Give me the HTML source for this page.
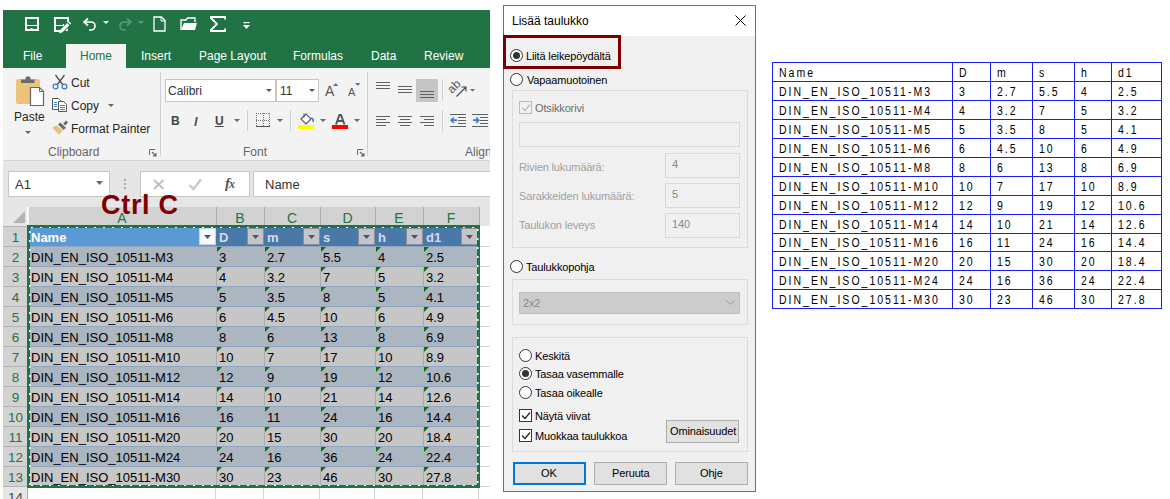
<!DOCTYPE html><html><head><meta charset="utf-8"><style>
*{margin:0;padding:0;box-sizing:border-box}
html,body{width:1170px;height:499px;overflow:hidden;background:#fff;font-family:"Liberation Sans",sans-serif}
.a{position:absolute}
.t{position:absolute;white-space:nowrap;line-height:1}
.tab{color:#fff;font-size:12px;top:50px}
.rt{color:#262626;font-size:12px}
.gl{color:#666;font-size:12px}
.box{background:#fff;border:1px solid #c6c6c6}
.ch{position:absolute;top:207px;height:19px;background:#d2d2d2;border-left:1px solid #ababab}
.rh{position:absolute;left:3px;width:24px;height:20px;background:#d2d2d2;border-top:1px solid #b4b4b4}
.hl{position:absolute;font-size:14px;color:#217346;white-space:nowrap;line-height:1;text-align:center}
.cell{position:absolute;font-size:13px;color:#000;white-space:nowrap;line-height:1}
.dt{position:absolute;white-space:nowrap;font-size:11px;letter-spacing:-0.15px;color:#000;line-height:1}
.gb{position:absolute;border:1px solid #dcdcdc}
.radio{position:absolute;width:13px;height:13px;border:1px solid #333;border-radius:50%;background:#fff}
.radio.on::after{content:"";position:absolute;left:2px;top:2px;width:7px;height:7px;border-radius:50%;background:#333}
.chk{position:absolute;width:13px;height:13px;border:1px solid #333;background:#fff}
.btn{position:absolute;background:#e1e1e1;border:1px solid #adadad}
#rtab{position:absolute;left:772px;top:62px;border-collapse:collapse;table-layout:fixed;width:390px}
#rtab td{border:1px solid #1a1aff;height:19px;padding:1px 0 0 6px;font-size:12px;letter-spacing:2.3px;color:#000;white-space:nowrap;line-height:16px;overflow:hidden}
#rtab span{display:inline-block;transform:scaleX(0.875);transform-origin:0 0}
</style></head><body>
<div class="a" style="left:3px;top:10px;width:487px;height:58px;background:#217346"></div>
<div class="a" style="left:66px;top:44px;width:60px;height:24px;background:#f3f3f3"></div>
<div class="t tab" style="left:23px;color:#fff">File</div>
<div class="t tab" style="left:80px;color:#217346">Home</div>
<div class="t tab" style="left:141px;color:#fff">Insert</div>
<div class="t tab" style="left:199px;color:#fff">Page Layout</div>
<div class="t tab" style="left:293px;color:#fff">Formulas</div>
<div class="t tab" style="left:371px;color:#fff">Data</div>
<div class="t tab" style="left:424px;color:#fff">Review</div>
<svg class="a" style="left:24px;top:16px" width="16" height="16" viewBox="0 0 16 16"><path d="M2 2h12v12H2z" fill="none" stroke="#fff" stroke-width="2"/><path d="M2 7.5l1.5 1.5h9l1.5-1.5V10H2z" fill="#fff"/><rect x="6.5" y="12" width="2" height="2" fill="#fff"/></svg>
<svg class="a" style="left:53px;top:16px" width="18" height="18" viewBox="0 0 18 18"><path d="M7 15H2V2h13v4" fill="none" stroke="#fff" stroke-width="2"/><path d="M2 7.5l1.5 1.5h6l1.5-1.5V10H2z" fill="#fff"/><path d="M6 17.5l1.2-3.5 7-7 2.3 2.3-7 7z" fill="#fff"/><path d="M15 6.3l1-1 2.3 2.3-1 1z" fill="#fff"/><path d="M12 15h3v-3z" fill="#fff"/></svg>
<svg class="a" style="left:82px;top:17px" width="16" height="14" viewBox="0 0 16 14"><path d="M6 1.5L2 5l4 3.5" fill="none" stroke="#fff" stroke-width="1.7"/><path d="M2.5 5H9a4 4 0 0 1 0 8H7" fill="none" stroke="#fff" stroke-width="1.7"/></svg>
<svg class="a" style="left:103px;top:21px" width="6" height="4" viewBox="0 0 6 4"><path d="M0 0h6l-3 3z" fill="#fff"/></svg>
<svg class="a" style="left:117px;top:17px" width="16" height="14" viewBox="0 0 16 14"><path d="M10 1.5L14 5l-4 3.5" fill="none" stroke="#5a9a76" stroke-width="1.7"/><path d="M13.5 5H7a4 4 0 0 0 0 8h2" fill="none" stroke="#5a9a76" stroke-width="1.7"/></svg>
<svg class="a" style="left:138px;top:21px" width="6" height="4" viewBox="0 0 6 4"><path d="M0 0h6l-3 3z" fill="#5a9a76"/></svg>
<svg class="a" style="left:153px;top:16px" width="13" height="16" viewBox="0 0 13 16"><path d="M1 1h7.5l3.5 3.5V15H1z" fill="none" stroke="#fff" stroke-width="1.3"/><path d="M8 1v4h4" fill="none" stroke="#fff" stroke-width="1"/></svg>
<svg class="a" style="left:180px;top:17px" width="18" height="14" viewBox="0 0 18 14"><path d="M1 13V3h5l1.5-2H15v4" fill="none" stroke="#fff" stroke-width="1.4"/><path d="M1 13l3-7h13l-2 7z" fill="#fff"/></svg>
<svg class="a" style="left:209px;top:16px" width="17" height="16" viewBox="0 0 17 16"><path d="M1 1h15v2.5M1.5 1.5L8 8l-6.5 6.5M1 15h15v-2.5" fill="none" stroke="#fff" stroke-width="1.8"/></svg>
<svg class="a" style="left:243px;top:22px" width="7" height="8" viewBox="0 0 7 8"><rect x="0.5" y="0" width="6" height="1.2" fill="#fff"/><path d="M0 3h7l-3.5 4z" fill="#fff"/></svg>
<div class="a" style="left:3px;top:68px;width:487px;height:93px;background:#f3f3f3;border-bottom:1px solid #d4d4d4"></div>
<svg class="a" style="left:14px;top:75px" width="32" height="32" viewBox="0 0 32 32"><rect x="2" y="4" width="24" height="25" rx="2" fill="#ecc37b"/><path d="M7 4.5h13.5v3.5H7z" fill="#6a6a6a"/><rect x="11.5" y="1.5" width="5" height="4" rx="1.5" fill="#6a6a6a"/><path d="M16.5 12.5h9l4 4v14h-13z" fill="#fff" stroke="#666" stroke-width="1.2"/><path d="M25.5 12.5v4h4" fill="none" stroke="#666" stroke-width="1"/></svg>
<div class="t rt" style="left:14px;top:111px">Paste</div>
<svg class="a" style="left:25px;top:131px" width="6" height="4" viewBox="0 0 6 4"><path d="M0 0h6l-3 3z" fill="#666"/></svg>
<svg class="a" style="left:51px;top:72px" width="18" height="18" viewBox="0 0 18 18"><path d="M4.5 3l7.5 10M13.5 3L6 13" stroke="#555" stroke-width="1.4"/><circle cx="4.5" cy="14.5" r="2.4" fill="#f3f3f3" stroke="#3a78c0" stroke-width="1.2"/><circle cx="13.5" cy="14.5" r="2.4" fill="#f3f3f3" stroke="#3a78c0" stroke-width="1.2"/></svg>
<div class="t rt" style="left:71px;top:77px">Cut</div>
<svg class="a" style="left:52px;top:97px" width="16" height="16" viewBox="0 0 16 16"><path d="M0.5 1.5h6l2 2V12.5h-8z" fill="#fff" stroke="#555" stroke-width="1"/><path d="M6.5 4.5h5l3 3V14.5h-8z" fill="#fff" stroke="#555" stroke-width="1"/><rect x="2" y="5" width="3" height="1" fill="#3c7fc4"/><rect x="2" y="7" width="3" height="1" fill="#3c7fc4"/><rect x="2" y="9" width="3" height="1" fill="#3c7fc4"/><rect x="8" y="8" width="5" height="1" fill="#3c7fc4"/><rect x="8" y="10" width="5" height="1" fill="#3c7fc4"/><rect x="8" y="12" width="5" height="1" fill="#3c7fc4"/></svg>
<div class="t rt" style="left:71px;top:100px">Copy</div>
<svg class="a" style="left:108px;top:104px" width="6" height="4" viewBox="0 0 6 4"><path d="M0 0h6l-3 3z" fill="#666"/></svg>
<svg class="a" style="left:50px;top:117px" width="20" height="20" viewBox="0 0 20 20"><path d="M2.2 10.4L6.6 8.6 12.8 13.6 8.8 17.6z" fill="#e9c07a"/><path d="M8 7.6L10.4 5.4 16 10.8 13.6 13z" fill="#6a6a6a"/><path d="M13.2 6.4L16 3.6 18 5.6 15.4 8.4z" fill="#6a6a6a"/></svg>
<div class="t rt" style="left:71px;top:123px">Format Painter</div>
<div class="t gl" style="left:48px;top:146px">Clipboard</div>
<svg class="a" style="left:149px;top:149px" width="8" height="8" viewBox="0 0 8 8"><path d="M0.5 6V0.5H6" fill="none" stroke="#6a6a6a" stroke-width="1"/><path d="M7.5 3.5v4h-4z" fill="#6a6a6a"/><path d="M3 3l3.5 3.5" stroke="#6a6a6a" stroke-width="1.2"/></svg>
<div class="a" style="left:160px;top:72px;width:1px;height:84px;background:#d0d0d0"></div>
<div class="a box" style="left:165px;top:79px;width:111px;height:23px;border-color:#c6c6c6"></div>
<div class="a box" style="left:276px;top:79px;width:43px;height:23px;border-color:#c6c6c6"></div>
<div class="t rt" style="left:168px;top:85px;color:#333">Calibri</div>
<div class="t rt" style="left:280px;top:85px;color:#333">11</div>
<svg class="a" style="left:266px;top:89px" width="6" height="4" viewBox="0 0 6 4"><path d="M0 0h6l-3 3z" fill="#555"/></svg>
<svg class="a" style="left:309px;top:89px" width="6" height="4" viewBox="0 0 6 4"><path d="M0 0h6l-3 3z" fill="#555"/></svg>
<div class="t" style="left:325px;top:84px;font-size:14px;color:#555">A</div>
<svg class="a" style="left:333px;top:82px" width="6" height="5" viewBox="0 0 6 5"><path d="M0 4h5.5L2.75 1z" fill="#3c7fc4"/></svg>
<div class="t" style="left:348px;top:87px;font-size:11px;color:#555">A</div>
<svg class="a" style="left:355px;top:82px" width="6" height="5" viewBox="0 0 6 5"><path d="M0 1h5.5L2.75 4z" fill="#3c7fc4"/></svg>
<div class="t" style="left:171px;top:115px;font-size:12px;font-weight:bold;color:#444">B</div>
<div class="t" style="left:194px;top:115px;font-size:13px;font-style:italic;font-weight:bold;color:#555">I</div>
<div class="t" style="left:215px;top:115px;font-size:12px;font-weight:bold;color:#444;text-decoration:underline">U</div>
<svg class="a" style="left:234px;top:119px" width="6" height="4" viewBox="0 0 6 4"><path d="M0 0h6l-3 3z" fill="#666"/></svg>
<div class="a" style="left:247px;top:110px;width:1px;height:21px;background:#d0d0d0"></div>
<svg class="a" style="left:256px;top:113px" width="14" height="14" viewBox="0 0 14 14"><path d="M0.5 0v13M13.5 0v13M7.5 0v13M0 0.5h14M0 7.5h14" fill="none" stroke="#777" stroke-width="1" stroke-dasharray="1 1"/><path d="M0 13.5h14" stroke="#555" stroke-width="1"/></svg>
<svg class="a" style="left:277px;top:119px" width="6" height="4" viewBox="0 0 6 4"><path d="M0 0h6l-3 3z" fill="#666"/></svg>
<div class="a" style="left:290px;top:110px;width:1px;height:21px;background:#d0d0d0"></div>
<svg class="a" style="left:298px;top:112px" width="17" height="17" viewBox="0 0 17 17"><path d="M3 7l5-5 5 5-5 5z" fill="#fff" stroke="#555" stroke-width="1.1"/><path d="M6 1.5v4" stroke="#555"/><path d="M13 6c2 0 2.5 2 2 4" fill="none" stroke="#3c7fc4" stroke-width="1.6"/><rect x="0" y="13" width="16" height="4" fill="#ffff00"/></svg>
<svg class="a" style="left:320px;top:119px" width="6" height="4" viewBox="0 0 6 4"><path d="M0 0h6l-3 3z" fill="#666"/></svg>
<svg class="a" style="left:332px;top:112px" width="17" height="17" viewBox="0 0 17 17"><path d="M4 12.5L7.5 3h1.5L12.5 12.5M5.3 9h6" fill="none" stroke="#555" stroke-width="2"/><rect x="0" y="13" width="16" height="4" fill="#f00"/></svg>
<svg class="a" style="left:354px;top:119px" width="6" height="4" viewBox="0 0 6 4"><path d="M0 0h6l-3 3z" fill="#666"/></svg>
<div class="t gl" style="left:243px;top:146px">Font</div>
<svg class="a" style="left:357px;top:149px" width="8" height="8" viewBox="0 0 8 8"><path d="M0.5 6V0.5H6" fill="none" stroke="#6a6a6a" stroke-width="1"/><path d="M7.5 3.5v4h-4z" fill="#6a6a6a"/><path d="M3 3l3.5 3.5" stroke="#6a6a6a" stroke-width="1.2"/></svg>
<div class="a" style="left:367px;top:72px;width:1px;height:84px;background:#d0d0d0"></div>
<div class="a" style="left:416px;top:79px;width:22px;height:23px;background:#c5c5c5"></div>
<svg class="a" style="left:376px;top:82px" width="16" height="10" viewBox="0 0 16 10"><rect x="0" y="0" width="14" height="1" fill="#5f5f5f"/><rect x="0" y="3" width="14" height="1" fill="#5f5f5f"/><rect x="0" y="6" width="14" height="1" fill="#5f5f5f"/></svg>
<svg class="a" style="left:398px;top:86px" width="16" height="10" viewBox="0 0 16 10"><rect x="0" y="0" width="14" height="1" fill="#5f5f5f"/><rect x="0" y="3" width="14" height="1" fill="#5f5f5f"/><rect x="0" y="6" width="14" height="1" fill="#5f5f5f"/></svg>
<svg class="a" style="left:420px;top:91px" width="16" height="10" viewBox="0 0 16 10"><rect x="0" y="0" width="14" height="1" fill="#5f5f5f"/><rect x="0" y="3" width="14" height="1" fill="#5f5f5f"/><rect x="0" y="6" width="14" height="1" fill="#5f5f5f"/></svg>
<div class="a" style="left:442px;top:79px;width:1px;height:22px;background:#d0d0d0"></div>
<svg class="a" style="left:448px;top:80px" width="28" height="20" viewBox="0 0 28 20"><text x="0" y="0" font-size="12" fill="#555" font-family="Liberation Sans" transform="translate(4 14) rotate(-45)">ab</text><path d="M8.5 16.5l9-9M13.5 7h4.5v4.5" fill="none" stroke="#444" stroke-width="1.1"/><path d="M22 9h5l-2.5 2.5z" fill="#666"/></svg>
<svg class="a" style="left:376px;top:116px" width="16" height="13" viewBox="0 0 16 13"><rect x="0" y="0" width="14" height="1" fill="#5f5f5f"/><rect x="0" y="3" width="10" height="1" fill="#5f5f5f"/><rect x="0" y="6" width="14" height="1" fill="#5f5f5f"/><rect x="0" y="9" width="10" height="1" fill="#5f5f5f"/></svg>
<svg class="a" style="left:398px;top:116px" width="16" height="13" viewBox="0 0 16 13"><rect x="0" y="0" width="14" height="1" fill="#5f5f5f"/><rect x="2" y="3" width="10" height="1" fill="#5f5f5f"/><rect x="0" y="6" width="14" height="1" fill="#5f5f5f"/><rect x="2" y="9" width="10" height="1" fill="#5f5f5f"/></svg>
<svg class="a" style="left:420px;top:116px" width="16" height="13" viewBox="0 0 16 13"><rect x="0" y="0" width="14" height="1" fill="#5f5f5f"/><rect x="4" y="3" width="10" height="1" fill="#5f5f5f"/><rect x="0" y="6" width="14" height="1" fill="#5f5f5f"/><rect x="4" y="9" width="10" height="1" fill="#5f5f5f"/></svg>
<div class="a" style="left:442px;top:110px;width:1px;height:22px;background:#d0d0d0"></div>
<svg class="a" style="left:450px;top:114px" width="17" height="14" viewBox="0 0 17 14"><path d="M0 0.5h16M8 3.5h8M8 6.5h8M8 9.5h8M0 12.5h16" stroke="#5f5f5f" stroke-width="1"/><path d="M1 6.2h6M3.8 3.5L1.2 6.2 3.8 9" fill="none" stroke="#3c7fc4" stroke-width="1.7"/></svg>
<svg class="a" style="left:472px;top:114px" width="17" height="14" viewBox="0 0 17 14"><path d="M0 0.5h16M8 3.5h8M8 6.5h8M8 9.5h8M0 12.5h16" stroke="#5f5f5f" stroke-width="1"/><path d="M1 6.2h6M4.2 3.5L6.8 6.2 4.2 9" fill="none" stroke="#3c7fc4" stroke-width="1.7"/></svg>
<div class="a" style="left:465px;top:146px;width:25px;height:14px;overflow:hidden"><div class="t gl" style="left:0;top:0">Align</div></div>
<div class="a" style="left:3px;top:161px;width:487px;height:46px;background:#e6e6e6"></div>
<div class="a box" style="left:8px;top:171px;width:102px;height:26px"></div>
<div class="t" style="left:15px;top:178px;font-size:13px;color:#333">A1</div>
<svg class="a" style="left:96px;top:181px" width="8" height="5" viewBox="0 0 8 5"><path d="M0 0h7l-3.5 4z" fill="#6a6a6a"/></svg>
<svg class="a" style="left:123px;top:176px" width="4" height="16" viewBox="0 0 4 16"><rect x="1" y="3" width="2" height="2" fill="#aaa"/><rect x="1" y="7" width="2" height="2" fill="#aaa"/><rect x="1" y="11" width="2" height="2" fill="#aaa"/></svg>
<div class="a box" style="left:140px;top:171px;width:110px;height:26px"></div>
<svg class="a" style="left:153px;top:179px" width="12" height="11" viewBox="0 0 12 11"><path d="M1 1l9.5 9M10.5 1l-9.5 9" stroke="#bdbdbd" stroke-width="1.8"/></svg>
<svg class="a" style="left:188px;top:178px" width="15" height="13" viewBox="0 0 15 13"><path d="M1.5 7l4 4 7.5-9.5" fill="none" stroke="#c8c8c8" stroke-width="2.4"/></svg>
<div class="t" style="left:225px;top:176px;font-size:15px;font-style:italic;font-weight:bold;color:#555;font-family:'Liberation Serif'">f<span style="font-size:12px;position:relative;left:-1px">x</span></div>
<div class="a box" style="left:253px;top:171px;width:237px;height:26px;border-right:none"></div>
<div class="t" style="left:265px;top:178px;font-size:13px;color:#333">Name</div>
<div class="a" style="left:3px;top:207px;width:487px;height:292px;background:#fff"></div>
<div class="a" style="left:3px;top:207px;width:25px;height:19px;background:#e6e6e6;border-right:1px solid #fff"></div>
<svg class="a" style="left:13px;top:211px" width="13" height="12" viewBox="0 0 13 12"><path d="M12 0v12H0z" fill="#b4b4b4"/></svg>
<div class="ch" style="left:28px;width:188px;border-left-color:#f0f0f0"></div>
<div class="hl" style="left:28px;width:188px;top:211px">A</div>
<div class="ch" style="left:216px;width:48px;"></div>
<div class="hl" style="left:216px;width:48px;top:211px">B</div>
<div class="ch" style="left:264px;width:56px;"></div>
<div class="hl" style="left:264px;width:56px;top:211px">C</div>
<div class="ch" style="left:320px;width:55px;"></div>
<div class="hl" style="left:320px;width:55px;top:211px">D</div>
<div class="ch" style="left:375px;width:48px;"></div>
<div class="hl" style="left:375px;width:48px;top:211px">E</div>
<div class="ch" style="left:423px;width:56px;"></div>
<div class="hl" style="left:423px;width:56px;top:211px">F</div>
<div class="a" style="left:479px;top:207px;width:11px;height:20px;background:#e6e6e6;border-left:1px solid #ababab;border-bottom:1px solid #9e9e9e"></div>
<div class="rh" style="top:226px"></div>
<div class="hl" style="left:3px;width:25px;top:231px;font-size:13.5px;">1</div>
<div class="rh" style="top:246px"></div>
<div class="hl" style="left:3px;width:25px;top:251px;font-size:13.5px;">2</div>
<div class="rh" style="top:266px"></div>
<div class="hl" style="left:3px;width:25px;top:271px;font-size:13.5px;">3</div>
<div class="rh" style="top:286px"></div>
<div class="hl" style="left:3px;width:25px;top:291px;font-size:13.5px;">4</div>
<div class="rh" style="top:306px"></div>
<div class="hl" style="left:3px;width:25px;top:311px;font-size:13.5px;">5</div>
<div class="rh" style="top:326px"></div>
<div class="hl" style="left:3px;width:25px;top:331px;font-size:13.5px;">6</div>
<div class="rh" style="top:346px"></div>
<div class="hl" style="left:3px;width:25px;top:351px;font-size:13.5px;">7</div>
<div class="rh" style="top:366px"></div>
<div class="hl" style="left:3px;width:25px;top:371px;font-size:13.5px;">8</div>
<div class="rh" style="top:386px"></div>
<div class="hl" style="left:3px;width:25px;top:391px;font-size:13.5px;">9</div>
<div class="rh" style="top:406px"></div>
<div class="hl" style="left:3px;width:25px;top:411px;font-size:13.5px;">10</div>
<div class="rh" style="top:426px"></div>
<div class="hl" style="left:3px;width:25px;top:431px;font-size:13.5px;">11</div>
<div class="rh" style="top:446px"></div>
<div class="hl" style="left:3px;width:25px;top:451px;font-size:13.5px;">12</div>
<div class="rh" style="top:466px"></div>
<div class="hl" style="left:3px;width:25px;top:471px;font-size:13.5px;">13</div>
<div class="rh" style="top:486px;background:#e6e6e6"></div>
<div class="hl" style="left:3px;width:25px;top:491px;font-size:13.5px;color:#444">14</div>
<div class="a" style="left:27px;top:226px;width:1px;height:273px;background:#ababab"></div>
<div class="a" style="left:215px;top:486px;width:1px;height:13px;background:#d4d4d4"></div>
<div class="a" style="left:263px;top:486px;width:1px;height:13px;background:#d4d4d4"></div>
<div class="a" style="left:319px;top:486px;width:1px;height:13px;background:#d4d4d4"></div>
<div class="a" style="left:374px;top:486px;width:1px;height:13px;background:#d4d4d4"></div>
<div class="a" style="left:422px;top:486px;width:1px;height:13px;background:#d4d4d4"></div>
<div class="a" style="left:478px;top:486px;width:1px;height:13px;background:#d4d4d4"></div>
<div class="a" style="left:479px;top:226px;width:11px;height:273px;background:#fff"></div>
<div class="a" style="left:479px;top:246px;width:11px;height:1px;background:#d4d4d4"></div>
<div class="a" style="left:479px;top:266px;width:11px;height:1px;background:#d4d4d4"></div>
<div class="a" style="left:479px;top:286px;width:11px;height:1px;background:#d4d4d4"></div>
<div class="a" style="left:479px;top:306px;width:11px;height:1px;background:#d4d4d4"></div>
<div class="a" style="left:479px;top:326px;width:11px;height:1px;background:#d4d4d4"></div>
<div class="a" style="left:479px;top:346px;width:11px;height:1px;background:#d4d4d4"></div>
<div class="a" style="left:479px;top:366px;width:11px;height:1px;background:#d4d4d4"></div>
<div class="a" style="left:479px;top:386px;width:11px;height:1px;background:#d4d4d4"></div>
<div class="a" style="left:479px;top:406px;width:11px;height:1px;background:#d4d4d4"></div>
<div class="a" style="left:479px;top:426px;width:11px;height:1px;background:#d4d4d4"></div>
<div class="a" style="left:479px;top:446px;width:11px;height:1px;background:#d4d4d4"></div>
<div class="a" style="left:479px;top:466px;width:11px;height:1px;background:#d4d4d4"></div>
<div class="a" style="left:479px;top:486px;width:11px;height:1px;background:#d4d4d4"></div>
<div class="a" style="left:28px;top:226px;width:451px;height:20px;background:#4a78a8;"></div>
<div class="a" style="left:28px;top:226px;width:188px;height:20px;background:#5b9bd5"></div>
<div class="a" style="left:199px;top:228px;width:17px;height:17px;background:#f5f8fc;border:1px solid #c6d3e0"></div>
<svg class="a" style="left:204px;top:235px" width="8" height="5" viewBox="0 0 8 5"><path d="M0 0h7l-3.5 4z" fill="#555"/></svg>
<div class="a" style="left:247px;top:228px;width:17px;height:17px;background:#c2c6cc;border:1px solid #8a8f96"></div>
<svg class="a" style="left:252px;top:235px" width="8" height="5" viewBox="0 0 8 5"><path d="M0 0h7l-3.5 4z" fill="#555"/></svg>
<div class="a" style="left:303px;top:228px;width:17px;height:17px;background:#c2c6cc;border:1px solid #8a8f96"></div>
<svg class="a" style="left:308px;top:235px" width="8" height="5" viewBox="0 0 8 5"><path d="M0 0h7l-3.5 4z" fill="#555"/></svg>
<div class="a" style="left:358px;top:228px;width:17px;height:17px;background:#c2c6cc;border:1px solid #8a8f96"></div>
<svg class="a" style="left:363px;top:235px" width="8" height="5" viewBox="0 0 8 5"><path d="M0 0h7l-3.5 4z" fill="#555"/></svg>
<div class="a" style="left:406px;top:228px;width:17px;height:17px;background:#c2c6cc;border:1px solid #8a8f96"></div>
<svg class="a" style="left:411px;top:235px" width="8" height="5" viewBox="0 0 8 5"><path d="M0 0h7l-3.5 4z" fill="#555"/></svg>
<div class="a" style="left:461px;top:228px;width:17px;height:17px;background:#c2c6cc;border:1px solid #8a8f96"></div>
<svg class="a" style="left:466px;top:235px" width="8" height="5" viewBox="0 0 8 5"><path d="M0 0h7l-3.5 4z" fill="#555"/></svg>
<div class="a" style="left:28px;top:246px;width:451px;height:20px;background:#acb6c1;border-top:1px solid #8ea6c2"></div>
<svg class="a" style="left:217px;top:247px" width="5" height="5" viewBox="0 0 5 5"><path d="M0 0h5L0 5z" fill="#0b700b"/></svg>
<svg class="a" style="left:265px;top:247px" width="5" height="5" viewBox="0 0 5 5"><path d="M0 0h5L0 5z" fill="#0b700b"/></svg>
<svg class="a" style="left:321px;top:247px" width="5" height="5" viewBox="0 0 5 5"><path d="M0 0h5L0 5z" fill="#0b700b"/></svg>
<svg class="a" style="left:376px;top:247px" width="5" height="5" viewBox="0 0 5 5"><path d="M0 0h5L0 5z" fill="#0b700b"/></svg>
<svg class="a" style="left:424px;top:247px" width="5" height="5" viewBox="0 0 5 5"><path d="M0 0h5L0 5z" fill="#0b700b"/></svg>
<div class="a" style="left:28px;top:266px;width:451px;height:20px;background:#c6c6c6;border-top:1px solid #8ea6c2"></div>
<div class="a" style="left:216px;top:266px;width:1px;height:20px;background:#ababab"></div>
<svg class="a" style="left:217px;top:267px" width="5" height="5" viewBox="0 0 5 5"><path d="M0 0h5L0 5z" fill="#0b700b"/></svg>
<div class="a" style="left:264px;top:266px;width:1px;height:20px;background:#ababab"></div>
<svg class="a" style="left:265px;top:267px" width="5" height="5" viewBox="0 0 5 5"><path d="M0 0h5L0 5z" fill="#0b700b"/></svg>
<div class="a" style="left:320px;top:266px;width:1px;height:20px;background:#ababab"></div>
<svg class="a" style="left:321px;top:267px" width="5" height="5" viewBox="0 0 5 5"><path d="M0 0h5L0 5z" fill="#0b700b"/></svg>
<div class="a" style="left:375px;top:266px;width:1px;height:20px;background:#ababab"></div>
<svg class="a" style="left:376px;top:267px" width="5" height="5" viewBox="0 0 5 5"><path d="M0 0h5L0 5z" fill="#0b700b"/></svg>
<div class="a" style="left:423px;top:266px;width:1px;height:20px;background:#ababab"></div>
<svg class="a" style="left:424px;top:267px" width="5" height="5" viewBox="0 0 5 5"><path d="M0 0h5L0 5z" fill="#0b700b"/></svg>
<div class="a" style="left:28px;top:286px;width:451px;height:20px;background:#acb6c1;border-top:1px solid #8ea6c2"></div>
<svg class="a" style="left:217px;top:287px" width="5" height="5" viewBox="0 0 5 5"><path d="M0 0h5L0 5z" fill="#0b700b"/></svg>
<svg class="a" style="left:265px;top:287px" width="5" height="5" viewBox="0 0 5 5"><path d="M0 0h5L0 5z" fill="#0b700b"/></svg>
<svg class="a" style="left:321px;top:287px" width="5" height="5" viewBox="0 0 5 5"><path d="M0 0h5L0 5z" fill="#0b700b"/></svg>
<svg class="a" style="left:376px;top:287px" width="5" height="5" viewBox="0 0 5 5"><path d="M0 0h5L0 5z" fill="#0b700b"/></svg>
<svg class="a" style="left:424px;top:287px" width="5" height="5" viewBox="0 0 5 5"><path d="M0 0h5L0 5z" fill="#0b700b"/></svg>
<div class="a" style="left:28px;top:306px;width:451px;height:20px;background:#c6c6c6;border-top:1px solid #8ea6c2"></div>
<div class="a" style="left:216px;top:306px;width:1px;height:20px;background:#ababab"></div>
<svg class="a" style="left:217px;top:307px" width="5" height="5" viewBox="0 0 5 5"><path d="M0 0h5L0 5z" fill="#0b700b"/></svg>
<div class="a" style="left:264px;top:306px;width:1px;height:20px;background:#ababab"></div>
<svg class="a" style="left:265px;top:307px" width="5" height="5" viewBox="0 0 5 5"><path d="M0 0h5L0 5z" fill="#0b700b"/></svg>
<div class="a" style="left:320px;top:306px;width:1px;height:20px;background:#ababab"></div>
<svg class="a" style="left:321px;top:307px" width="5" height="5" viewBox="0 0 5 5"><path d="M0 0h5L0 5z" fill="#0b700b"/></svg>
<div class="a" style="left:375px;top:306px;width:1px;height:20px;background:#ababab"></div>
<svg class="a" style="left:376px;top:307px" width="5" height="5" viewBox="0 0 5 5"><path d="M0 0h5L0 5z" fill="#0b700b"/></svg>
<div class="a" style="left:423px;top:306px;width:1px;height:20px;background:#ababab"></div>
<svg class="a" style="left:424px;top:307px" width="5" height="5" viewBox="0 0 5 5"><path d="M0 0h5L0 5z" fill="#0b700b"/></svg>
<div class="a" style="left:28px;top:326px;width:451px;height:20px;background:#acb6c1;border-top:1px solid #8ea6c2"></div>
<svg class="a" style="left:217px;top:327px" width="5" height="5" viewBox="0 0 5 5"><path d="M0 0h5L0 5z" fill="#0b700b"/></svg>
<svg class="a" style="left:265px;top:327px" width="5" height="5" viewBox="0 0 5 5"><path d="M0 0h5L0 5z" fill="#0b700b"/></svg>
<svg class="a" style="left:321px;top:327px" width="5" height="5" viewBox="0 0 5 5"><path d="M0 0h5L0 5z" fill="#0b700b"/></svg>
<svg class="a" style="left:376px;top:327px" width="5" height="5" viewBox="0 0 5 5"><path d="M0 0h5L0 5z" fill="#0b700b"/></svg>
<svg class="a" style="left:424px;top:327px" width="5" height="5" viewBox="0 0 5 5"><path d="M0 0h5L0 5z" fill="#0b700b"/></svg>
<div class="a" style="left:28px;top:346px;width:451px;height:20px;background:#c6c6c6;border-top:1px solid #8ea6c2"></div>
<div class="a" style="left:216px;top:346px;width:1px;height:20px;background:#ababab"></div>
<svg class="a" style="left:217px;top:347px" width="5" height="5" viewBox="0 0 5 5"><path d="M0 0h5L0 5z" fill="#0b700b"/></svg>
<div class="a" style="left:264px;top:346px;width:1px;height:20px;background:#ababab"></div>
<svg class="a" style="left:265px;top:347px" width="5" height="5" viewBox="0 0 5 5"><path d="M0 0h5L0 5z" fill="#0b700b"/></svg>
<div class="a" style="left:320px;top:346px;width:1px;height:20px;background:#ababab"></div>
<svg class="a" style="left:321px;top:347px" width="5" height="5" viewBox="0 0 5 5"><path d="M0 0h5L0 5z" fill="#0b700b"/></svg>
<div class="a" style="left:375px;top:346px;width:1px;height:20px;background:#ababab"></div>
<svg class="a" style="left:376px;top:347px" width="5" height="5" viewBox="0 0 5 5"><path d="M0 0h5L0 5z" fill="#0b700b"/></svg>
<div class="a" style="left:423px;top:346px;width:1px;height:20px;background:#ababab"></div>
<svg class="a" style="left:424px;top:347px" width="5" height="5" viewBox="0 0 5 5"><path d="M0 0h5L0 5z" fill="#0b700b"/></svg>
<div class="a" style="left:28px;top:366px;width:451px;height:20px;background:#acb6c1;border-top:1px solid #8ea6c2"></div>
<svg class="a" style="left:217px;top:367px" width="5" height="5" viewBox="0 0 5 5"><path d="M0 0h5L0 5z" fill="#0b700b"/></svg>
<svg class="a" style="left:265px;top:367px" width="5" height="5" viewBox="0 0 5 5"><path d="M0 0h5L0 5z" fill="#0b700b"/></svg>
<svg class="a" style="left:321px;top:367px" width="5" height="5" viewBox="0 0 5 5"><path d="M0 0h5L0 5z" fill="#0b700b"/></svg>
<svg class="a" style="left:376px;top:367px" width="5" height="5" viewBox="0 0 5 5"><path d="M0 0h5L0 5z" fill="#0b700b"/></svg>
<svg class="a" style="left:424px;top:367px" width="5" height="5" viewBox="0 0 5 5"><path d="M0 0h5L0 5z" fill="#0b700b"/></svg>
<div class="a" style="left:28px;top:386px;width:451px;height:20px;background:#c6c6c6;border-top:1px solid #8ea6c2"></div>
<div class="a" style="left:216px;top:386px;width:1px;height:20px;background:#ababab"></div>
<svg class="a" style="left:217px;top:387px" width="5" height="5" viewBox="0 0 5 5"><path d="M0 0h5L0 5z" fill="#0b700b"/></svg>
<div class="a" style="left:264px;top:386px;width:1px;height:20px;background:#ababab"></div>
<svg class="a" style="left:265px;top:387px" width="5" height="5" viewBox="0 0 5 5"><path d="M0 0h5L0 5z" fill="#0b700b"/></svg>
<div class="a" style="left:320px;top:386px;width:1px;height:20px;background:#ababab"></div>
<svg class="a" style="left:321px;top:387px" width="5" height="5" viewBox="0 0 5 5"><path d="M0 0h5L0 5z" fill="#0b700b"/></svg>
<div class="a" style="left:375px;top:386px;width:1px;height:20px;background:#ababab"></div>
<svg class="a" style="left:376px;top:387px" width="5" height="5" viewBox="0 0 5 5"><path d="M0 0h5L0 5z" fill="#0b700b"/></svg>
<div class="a" style="left:423px;top:386px;width:1px;height:20px;background:#ababab"></div>
<svg class="a" style="left:424px;top:387px" width="5" height="5" viewBox="0 0 5 5"><path d="M0 0h5L0 5z" fill="#0b700b"/></svg>
<div class="a" style="left:28px;top:406px;width:451px;height:20px;background:#acb6c1;border-top:1px solid #8ea6c2"></div>
<svg class="a" style="left:217px;top:407px" width="5" height="5" viewBox="0 0 5 5"><path d="M0 0h5L0 5z" fill="#0b700b"/></svg>
<svg class="a" style="left:265px;top:407px" width="5" height="5" viewBox="0 0 5 5"><path d="M0 0h5L0 5z" fill="#0b700b"/></svg>
<svg class="a" style="left:321px;top:407px" width="5" height="5" viewBox="0 0 5 5"><path d="M0 0h5L0 5z" fill="#0b700b"/></svg>
<svg class="a" style="left:376px;top:407px" width="5" height="5" viewBox="0 0 5 5"><path d="M0 0h5L0 5z" fill="#0b700b"/></svg>
<svg class="a" style="left:424px;top:407px" width="5" height="5" viewBox="0 0 5 5"><path d="M0 0h5L0 5z" fill="#0b700b"/></svg>
<div class="a" style="left:28px;top:426px;width:451px;height:20px;background:#c6c6c6;border-top:1px solid #8ea6c2"></div>
<div class="a" style="left:216px;top:426px;width:1px;height:20px;background:#ababab"></div>
<svg class="a" style="left:217px;top:427px" width="5" height="5" viewBox="0 0 5 5"><path d="M0 0h5L0 5z" fill="#0b700b"/></svg>
<div class="a" style="left:264px;top:426px;width:1px;height:20px;background:#ababab"></div>
<svg class="a" style="left:265px;top:427px" width="5" height="5" viewBox="0 0 5 5"><path d="M0 0h5L0 5z" fill="#0b700b"/></svg>
<div class="a" style="left:320px;top:426px;width:1px;height:20px;background:#ababab"></div>
<svg class="a" style="left:321px;top:427px" width="5" height="5" viewBox="0 0 5 5"><path d="M0 0h5L0 5z" fill="#0b700b"/></svg>
<div class="a" style="left:375px;top:426px;width:1px;height:20px;background:#ababab"></div>
<svg class="a" style="left:376px;top:427px" width="5" height="5" viewBox="0 0 5 5"><path d="M0 0h5L0 5z" fill="#0b700b"/></svg>
<div class="a" style="left:423px;top:426px;width:1px;height:20px;background:#ababab"></div>
<svg class="a" style="left:424px;top:427px" width="5" height="5" viewBox="0 0 5 5"><path d="M0 0h5L0 5z" fill="#0b700b"/></svg>
<div class="a" style="left:28px;top:446px;width:451px;height:20px;background:#acb6c1;border-top:1px solid #8ea6c2"></div>
<svg class="a" style="left:217px;top:447px" width="5" height="5" viewBox="0 0 5 5"><path d="M0 0h5L0 5z" fill="#0b700b"/></svg>
<svg class="a" style="left:265px;top:447px" width="5" height="5" viewBox="0 0 5 5"><path d="M0 0h5L0 5z" fill="#0b700b"/></svg>
<svg class="a" style="left:321px;top:447px" width="5" height="5" viewBox="0 0 5 5"><path d="M0 0h5L0 5z" fill="#0b700b"/></svg>
<svg class="a" style="left:376px;top:447px" width="5" height="5" viewBox="0 0 5 5"><path d="M0 0h5L0 5z" fill="#0b700b"/></svg>
<svg class="a" style="left:424px;top:447px" width="5" height="5" viewBox="0 0 5 5"><path d="M0 0h5L0 5z" fill="#0b700b"/></svg>
<div class="a" style="left:28px;top:466px;width:451px;height:20px;background:#c6c6c6;border-top:1px solid #8ea6c2"></div>
<div class="a" style="left:216px;top:466px;width:1px;height:20px;background:#ababab"></div>
<svg class="a" style="left:217px;top:467px" width="5" height="5" viewBox="0 0 5 5"><path d="M0 0h5L0 5z" fill="#0b700b"/></svg>
<div class="a" style="left:264px;top:466px;width:1px;height:20px;background:#ababab"></div>
<svg class="a" style="left:265px;top:467px" width="5" height="5" viewBox="0 0 5 5"><path d="M0 0h5L0 5z" fill="#0b700b"/></svg>
<div class="a" style="left:320px;top:466px;width:1px;height:20px;background:#ababab"></div>
<svg class="a" style="left:321px;top:467px" width="5" height="5" viewBox="0 0 5 5"><path d="M0 0h5L0 5z" fill="#0b700b"/></svg>
<div class="a" style="left:375px;top:466px;width:1px;height:20px;background:#ababab"></div>
<svg class="a" style="left:376px;top:467px" width="5" height="5" viewBox="0 0 5 5"><path d="M0 0h5L0 5z" fill="#0b700b"/></svg>
<div class="a" style="left:423px;top:466px;width:1px;height:20px;background:#ababab"></div>
<svg class="a" style="left:424px;top:467px" width="5" height="5" viewBox="0 0 5 5"><path d="M0 0h5L0 5z" fill="#0b700b"/></svg>
<div class="cell" style="left:31px;top:231px;color:#fff;font-weight:bold">Name</div>
<div class="cell" style="left:219px;top:231px;color:#d5dce5;font-weight:bold">D</div>
<div class="cell" style="left:267px;top:231px;color:#d5dce5;font-weight:bold">m</div>
<div class="cell" style="left:323px;top:231px;color:#d5dce5;font-weight:bold">s</div>
<div class="cell" style="left:378px;top:231px;color:#d5dce5;font-weight:bold">h</div>
<div class="cell" style="left:426px;top:231px;color:#d5dce5;font-weight:bold">d1</div>
<div class="cell" style="left:31px;top:251px">DIN_EN_ISO_10511-M3</div>
<div class="cell" style="left:219px;top:251px;">3</div>
<div class="cell" style="left:267px;top:251px;">2.7</div>
<div class="cell" style="left:323px;top:251px;">5.5</div>
<div class="cell" style="left:378px;top:251px;">4</div>
<div class="cell" style="left:426px;top:251px;">2.5</div>
<div class="cell" style="left:31px;top:271px">DIN_EN_ISO_10511-M4</div>
<div class="cell" style="left:219px;top:271px;">4</div>
<div class="cell" style="left:267px;top:271px;">3.2</div>
<div class="cell" style="left:323px;top:271px;">7</div>
<div class="cell" style="left:378px;top:271px;">5</div>
<div class="cell" style="left:426px;top:271px;">3.2</div>
<div class="cell" style="left:31px;top:291px">DIN_EN_ISO_10511-M5</div>
<div class="cell" style="left:219px;top:291px;">5</div>
<div class="cell" style="left:267px;top:291px;">3.5</div>
<div class="cell" style="left:323px;top:291px;">8</div>
<div class="cell" style="left:378px;top:291px;">5</div>
<div class="cell" style="left:426px;top:291px;">4.1</div>
<div class="cell" style="left:31px;top:311px">DIN_EN_ISO_10511-M6</div>
<div class="cell" style="left:219px;top:311px;">6</div>
<div class="cell" style="left:267px;top:311px;">4.5</div>
<div class="cell" style="left:323px;top:311px;">10</div>
<div class="cell" style="left:378px;top:311px;">6</div>
<div class="cell" style="left:426px;top:311px;">4.9</div>
<div class="cell" style="left:31px;top:331px">DIN_EN_ISO_10511-M8</div>
<div class="cell" style="left:219px;top:331px;">8</div>
<div class="cell" style="left:267px;top:331px;">6</div>
<div class="cell" style="left:323px;top:331px;">13</div>
<div class="cell" style="left:378px;top:331px;">8</div>
<div class="cell" style="left:426px;top:331px;">6.9</div>
<div class="cell" style="left:31px;top:351px">DIN_EN_ISO_10511-M10</div>
<div class="cell" style="left:219px;top:351px;">10</div>
<div class="cell" style="left:267px;top:351px;">7</div>
<div class="cell" style="left:323px;top:351px;">17</div>
<div class="cell" style="left:378px;top:351px;">10</div>
<div class="cell" style="left:426px;top:351px;">8.9</div>
<div class="cell" style="left:31px;top:371px">DIN_EN_ISO_10511-M12</div>
<div class="cell" style="left:219px;top:371px;">12</div>
<div class="cell" style="left:267px;top:371px;">9</div>
<div class="cell" style="left:323px;top:371px;">19</div>
<div class="cell" style="left:378px;top:371px;">12</div>
<div class="cell" style="left:426px;top:371px;">10.6</div>
<div class="cell" style="left:31px;top:391px">DIN_EN_ISO_10511-M14</div>
<div class="cell" style="left:219px;top:391px;">14</div>
<div class="cell" style="left:267px;top:391px;">10</div>
<div class="cell" style="left:323px;top:391px;">21</div>
<div class="cell" style="left:378px;top:391px;">14</div>
<div class="cell" style="left:426px;top:391px;">12.6</div>
<div class="cell" style="left:31px;top:411px">DIN_EN_ISO_10511-M16</div>
<div class="cell" style="left:219px;top:411px;">16</div>
<div class="cell" style="left:267px;top:411px;">11</div>
<div class="cell" style="left:323px;top:411px;">24</div>
<div class="cell" style="left:378px;top:411px;">16</div>
<div class="cell" style="left:426px;top:411px;">14.4</div>
<div class="cell" style="left:31px;top:431px">DIN_EN_ISO_10511-M20</div>
<div class="cell" style="left:219px;top:431px;">20</div>
<div class="cell" style="left:267px;top:431px;">15</div>
<div class="cell" style="left:323px;top:431px;">30</div>
<div class="cell" style="left:378px;top:431px;">20</div>
<div class="cell" style="left:426px;top:431px;">18.4</div>
<div class="cell" style="left:31px;top:451px">DIN_EN_ISO_10511-M24</div>
<div class="cell" style="left:219px;top:451px;">24</div>
<div class="cell" style="left:267px;top:451px;">16</div>
<div class="cell" style="left:323px;top:451px;">36</div>
<div class="cell" style="left:378px;top:451px;">24</div>
<div class="cell" style="left:426px;top:451px;">22.4</div>
<div class="cell" style="left:31px;top:471px">DIN_EN_ISO_10511-M30</div>
<div class="cell" style="left:219px;top:471px;">30</div>
<div class="cell" style="left:267px;top:471px;">23</div>
<div class="cell" style="left:323px;top:471px;">46</div>
<div class="cell" style="left:378px;top:471px;">30</div>
<div class="cell" style="left:426px;top:471px;">27.8</div>
<div class="a" style="left:27px;top:225px;width:453px;height:263px;border:3px solid #217346"></div>
<svg class="a" style="left:27px;top:225px" width="453" height="263" viewBox="0 0 453 263"><rect x="4" y="2" width="2" height="1" fill="#fff"/><rect x="4" y="260" width="2" height="1" fill="#fff"/><rect x="13" y="2" width="2" height="1" fill="#fff"/><rect x="13" y="260" width="2" height="1" fill="#fff"/><rect x="22" y="2" width="2" height="1" fill="#fff"/><rect x="22" y="260" width="2" height="1" fill="#fff"/><rect x="31" y="2" width="2" height="1" fill="#fff"/><rect x="31" y="260" width="2" height="1" fill="#fff"/><rect x="40" y="2" width="2" height="1" fill="#fff"/><rect x="40" y="260" width="2" height="1" fill="#fff"/><rect x="49" y="2" width="2" height="1" fill="#fff"/><rect x="49" y="260" width="2" height="1" fill="#fff"/><rect x="58" y="2" width="2" height="1" fill="#fff"/><rect x="58" y="260" width="2" height="1" fill="#fff"/><rect x="67" y="2" width="2" height="1" fill="#fff"/><rect x="67" y="260" width="2" height="1" fill="#fff"/><rect x="76" y="2" width="2" height="1" fill="#fff"/><rect x="76" y="260" width="2" height="1" fill="#fff"/><rect x="85" y="2" width="2" height="1" fill="#fff"/><rect x="85" y="260" width="2" height="1" fill="#fff"/><rect x="94" y="2" width="2" height="1" fill="#fff"/><rect x="94" y="260" width="2" height="1" fill="#fff"/><rect x="103" y="2" width="2" height="1" fill="#fff"/><rect x="103" y="260" width="2" height="1" fill="#fff"/><rect x="112" y="2" width="2" height="1" fill="#fff"/><rect x="112" y="260" width="2" height="1" fill="#fff"/><rect x="121" y="2" width="2" height="1" fill="#fff"/><rect x="121" y="260" width="2" height="1" fill="#fff"/><rect x="130" y="2" width="2" height="1" fill="#fff"/><rect x="130" y="260" width="2" height="1" fill="#fff"/><rect x="139" y="2" width="2" height="1" fill="#fff"/><rect x="139" y="260" width="2" height="1" fill="#fff"/><rect x="148" y="2" width="2" height="1" fill="#fff"/><rect x="148" y="260" width="2" height="1" fill="#fff"/><rect x="157" y="2" width="2" height="1" fill="#fff"/><rect x="157" y="260" width="2" height="1" fill="#fff"/><rect x="166" y="2" width="2" height="1" fill="#fff"/><rect x="166" y="260" width="2" height="1" fill="#fff"/><rect x="175" y="2" width="2" height="1" fill="#fff"/><rect x="175" y="260" width="2" height="1" fill="#fff"/><rect x="184" y="2" width="2" height="1" fill="#fff"/><rect x="184" y="260" width="2" height="1" fill="#fff"/><rect x="193" y="2" width="2" height="1" fill="#fff"/><rect x="193" y="260" width="2" height="1" fill="#fff"/><rect x="202" y="2" width="2" height="1" fill="#fff"/><rect x="202" y="260" width="2" height="1" fill="#fff"/><rect x="211" y="2" width="2" height="1" fill="#fff"/><rect x="211" y="260" width="2" height="1" fill="#fff"/><rect x="220" y="2" width="2" height="1" fill="#fff"/><rect x="220" y="260" width="2" height="1" fill="#fff"/><rect x="229" y="2" width="2" height="1" fill="#fff"/><rect x="229" y="260" width="2" height="1" fill="#fff"/><rect x="238" y="2" width="2" height="1" fill="#fff"/><rect x="238" y="260" width="2" height="1" fill="#fff"/><rect x="247" y="2" width="2" height="1" fill="#fff"/><rect x="247" y="260" width="2" height="1" fill="#fff"/><rect x="256" y="2" width="2" height="1" fill="#fff"/><rect x="256" y="260" width="2" height="1" fill="#fff"/><rect x="265" y="2" width="2" height="1" fill="#fff"/><rect x="265" y="260" width="2" height="1" fill="#fff"/><rect x="274" y="2" width="2" height="1" fill="#fff"/><rect x="274" y="260" width="2" height="1" fill="#fff"/><rect x="283" y="2" width="2" height="1" fill="#fff"/><rect x="283" y="260" width="2" height="1" fill="#fff"/><rect x="292" y="2" width="2" height="1" fill="#fff"/><rect x="292" y="260" width="2" height="1" fill="#fff"/><rect x="301" y="2" width="2" height="1" fill="#fff"/><rect x="301" y="260" width="2" height="1" fill="#fff"/><rect x="310" y="2" width="2" height="1" fill="#fff"/><rect x="310" y="260" width="2" height="1" fill="#fff"/><rect x="319" y="2" width="2" height="1" fill="#fff"/><rect x="319" y="260" width="2" height="1" fill="#fff"/><rect x="328" y="2" width="2" height="1" fill="#fff"/><rect x="328" y="260" width="2" height="1" fill="#fff"/><rect x="337" y="2" width="2" height="1" fill="#fff"/><rect x="337" y="260" width="2" height="1" fill="#fff"/><rect x="346" y="2" width="2" height="1" fill="#fff"/><rect x="346" y="260" width="2" height="1" fill="#fff"/><rect x="355" y="2" width="2" height="1" fill="#fff"/><rect x="355" y="260" width="2" height="1" fill="#fff"/><rect x="364" y="2" width="2" height="1" fill="#fff"/><rect x="364" y="260" width="2" height="1" fill="#fff"/><rect x="373" y="2" width="2" height="1" fill="#fff"/><rect x="373" y="260" width="2" height="1" fill="#fff"/><rect x="382" y="2" width="2" height="1" fill="#fff"/><rect x="382" y="260" width="2" height="1" fill="#fff"/><rect x="391" y="2" width="2" height="1" fill="#fff"/><rect x="391" y="260" width="2" height="1" fill="#fff"/><rect x="400" y="2" width="2" height="1" fill="#fff"/><rect x="400" y="260" width="2" height="1" fill="#fff"/><rect x="409" y="2" width="2" height="1" fill="#fff"/><rect x="409" y="260" width="2" height="1" fill="#fff"/><rect x="418" y="2" width="2" height="1" fill="#fff"/><rect x="418" y="260" width="2" height="1" fill="#fff"/><rect x="427" y="2" width="2" height="1" fill="#fff"/><rect x="427" y="260" width="2" height="1" fill="#fff"/><rect x="436" y="2" width="2" height="1" fill="#fff"/><rect x="436" y="260" width="2" height="1" fill="#fff"/><rect x="445" y="2" width="2" height="1" fill="#fff"/><rect x="445" y="260" width="2" height="1" fill="#fff"/><rect x="2" y="6" width="1.5" height="2" fill="#fff"/><rect x="2" y="15" width="1.5" height="2" fill="#fff"/><rect x="2" y="24" width="1.5" height="2" fill="#fff"/><rect x="2" y="33" width="1.5" height="2" fill="#fff"/><rect x="2" y="42" width="1.5" height="2" fill="#fff"/><rect x="2" y="51" width="1.5" height="2" fill="#fff"/><rect x="2" y="60" width="1.5" height="2" fill="#fff"/><rect x="2" y="69" width="1.5" height="2" fill="#fff"/><rect x="2" y="78" width="1.5" height="2" fill="#fff"/><rect x="2" y="87" width="1.5" height="2" fill="#fff"/><rect x="2" y="96" width="1.5" height="2" fill="#fff"/><rect x="2" y="105" width="1.5" height="2" fill="#fff"/><rect x="2" y="114" width="1.5" height="2" fill="#fff"/><rect x="2" y="123" width="1.5" height="2" fill="#fff"/><rect x="2" y="132" width="1.5" height="2" fill="#fff"/><rect x="2" y="141" width="1.5" height="2" fill="#fff"/><rect x="2" y="150" width="1.5" height="2" fill="#fff"/><rect x="2" y="159" width="1.5" height="2" fill="#fff"/><rect x="2" y="168" width="1.5" height="2" fill="#fff"/><rect x="2" y="177" width="1.5" height="2" fill="#fff"/><rect x="2" y="186" width="1.5" height="2" fill="#fff"/><rect x="2" y="195" width="1.5" height="2" fill="#fff"/><rect x="2" y="204" width="1.5" height="2" fill="#fff"/><rect x="2" y="213" width="1.5" height="2" fill="#fff"/><rect x="2" y="222" width="1.5" height="2" fill="#fff"/><rect x="2" y="231" width="1.5" height="2" fill="#fff"/><rect x="2" y="240" width="1.5" height="2" fill="#fff"/><rect x="2" y="249" width="1.5" height="2" fill="#fff"/><rect x="2" y="258" width="1.5" height="2" fill="#fff"/><rect x="450" y="4" width="1.5" height="2" fill="#fff"/><rect x="450" y="13" width="1.5" height="2" fill="#fff"/><rect x="450" y="22" width="1.5" height="2" fill="#fff"/><rect x="450" y="31" width="1.5" height="2" fill="#fff"/><rect x="450" y="40" width="1.5" height="2" fill="#fff"/><rect x="450" y="49" width="1.5" height="2" fill="#fff"/><rect x="450" y="58" width="1.5" height="2" fill="#fff"/><rect x="450" y="67" width="1.5" height="2" fill="#fff"/><rect x="450" y="76" width="1.5" height="2" fill="#fff"/><rect x="450" y="85" width="1.5" height="2" fill="#fff"/><rect x="450" y="94" width="1.5" height="2" fill="#fff"/><rect x="450" y="103" width="1.5" height="2" fill="#fff"/><rect x="450" y="112" width="1.5" height="2" fill="#fff"/><rect x="450" y="121" width="1.5" height="2" fill="#fff"/><rect x="450" y="130" width="1.5" height="2" fill="#fff"/><rect x="450" y="139" width="1.5" height="2" fill="#fff"/><rect x="450" y="148" width="1.5" height="2" fill="#fff"/><rect x="450" y="157" width="1.5" height="2" fill="#fff"/><rect x="450" y="166" width="1.5" height="2" fill="#fff"/><rect x="450" y="175" width="1.5" height="2" fill="#fff"/><rect x="450" y="184" width="1.5" height="2" fill="#fff"/><rect x="450" y="193" width="1.5" height="2" fill="#fff"/><rect x="450" y="202" width="1.5" height="2" fill="#fff"/><rect x="450" y="211" width="1.5" height="2" fill="#fff"/><rect x="450" y="220" width="1.5" height="2" fill="#fff"/><rect x="450" y="229" width="1.5" height="2" fill="#fff"/><rect x="450" y="238" width="1.5" height="2" fill="#fff"/><rect x="450" y="247" width="1.5" height="2" fill="#fff"/><rect x="450" y="256" width="1.5" height="2" fill="#fff"/></svg>
<div class="t" style="left:101px;top:192px;font-size:27px;letter-spacing:0.7px;font-weight:bold;color:#7f0000">Ctrl C</div>
<div class="a" style="left:503px;top:5px;width:253px;height:487px;background:#f0f0f0;border:1px solid #707070"></div>
<div class="a" style="left:504px;top:6px;width:251px;height:30px;background:#fff"></div>
<div class="t" style="left:512px;top:15px;font-size:12px;color:#000">Lisää taulukko</div>
<svg class="a" style="left:735px;top:15px" width="11" height="11" viewBox="0 0 11 11"><path d="M0.5 0.5l10 10M10.5 0.5l-10 10" stroke="#000" stroke-width="1"/></svg>
<div class="a" style="left:503px;top:35px;width:118px;height:34px;border:3px solid #7a0000"></div>
<div class="radio on" style="left:510px;top:49px"></div>
<div class="dt" style="left:526px;top:51px">Liitä leikepöydältä</div>
<div class="radio" style="left:510px;top:73px"></div>
<div class="dt" style="left:527px;top:75px">Vapaamuotoinen</div>
<div class="gb" style="left:512px;top:90px;width:236px;height:158px"></div>
<div class="chk" style="left:519px;top:101px;border-color:#bcbcbc;background:#f0f0f0"></div>
<svg class="a" style="left:521px;top:103px" width="10" height="9" viewBox="0 0 10 9"><path d="M1 4.5l3 3 5-6" fill="none" stroke="#bcbcbc" stroke-width="1.2"/></svg>
<div class="dt" style="left:535px;top:103px;color:#6d6d6d">Otsikkorivi</div>
<div class="a" style="left:519px;top:122px;width:221px;height:25px;border:1px solid #d9d9d9"></div>
<div class="dt" style="left:519px;top:162px;color:#a0a0a0">Rivien lukumäärä:</div>
<div class="a" style="left:665px;top:153px;width:75px;height:25px;border:1px solid #d9d9d9"></div>
<div class="dt" style="left:672px;top:159px;color:#8a8a8a">4</div>
<div class="dt" style="left:519px;top:191px;color:#a0a0a0">Sarakkeiden lukumäärä:</div>
<div class="a" style="left:665px;top:183px;width:75px;height:25px;border:1px solid #d9d9d9"></div>
<div class="dt" style="left:672px;top:189px;color:#8a8a8a">5</div>
<div class="dt" style="left:519px;top:220px;color:#a0a0a0">Taulukon leveys</div>
<div class="a" style="left:665px;top:213px;width:75px;height:25px;border:1px solid #d9d9d9"></div>
<div class="dt" style="left:672px;top:219px;color:#8a8a8a">140</div>
<div class="radio" style="left:510px;top:260px"></div>
<div class="dt" style="left:526px;top:262px">Taulukkopohja</div>
<div class="gb" style="left:512px;top:279px;width:236px;height:46px"></div>
<div class="a" style="left:519px;top:292px;width:221px;height:22px;background:#cccccc;border:1px solid #bfbfbf"></div>
<div class="dt" style="left:523px;top:298px;color:#8a8a8a">2x2</div>
<svg class="a" style="left:726px;top:300px" width="9" height="5" viewBox="0 0 9 5"><path d="M0.5 0.5l4 4 4-4" fill="none" stroke="#999" stroke-width="1"/></svg>
<div class="gb" style="left:512px;top:337px;width:236px;height:115px"></div>
<div class="radio" style="left:519px;top:349px"></div>
<div class="dt" style="left:535px;top:351px">Keskitä</div>
<div class="radio on" style="left:519px;top:367px"></div>
<div class="dt" style="left:535px;top:369px">Tasaa vasemmalle</div>
<div class="radio" style="left:519px;top:386px"></div>
<div class="dt" style="left:535px;top:388px">Tasaa oikealle</div>
<div class="chk" style="left:519px;top:409px"></div>
<svg class="a" style="left:521px;top:411px" width="10" height="9" viewBox="0 0 10 9"><path d="M1 4.5l3 3 5-6" fill="none" stroke="#222" stroke-width="1.2"/></svg>
<div class="dt" style="left:535px;top:411px">Näytä viivat</div>
<div class="chk" style="left:519px;top:429px"></div>
<svg class="a" style="left:521px;top:431px" width="10" height="9" viewBox="0 0 10 9"><path d="M1 4.5l3 3 5-6" fill="none" stroke="#222" stroke-width="1.2"/></svg>
<div class="dt" style="left:535px;top:431px">Muokkaa taulukkoa</div>
<div class="btn" style="left:666px;top:420px;width:73px;height:23px"></div>
<div class="dt" style="left:670px;top:426px">Ominaisuudet</div>
<div class="btn" style="left:513px;top:462px;width:73px;height:23px;border:2px solid #0078d7"></div>
<div class="dt" style="left:541px;top:468px">OK</div>
<div class="btn" style="left:594px;top:462px;width:73px;height:23px"></div>
<div class="dt" style="left:612px;top:468px">Peruuta</div>
<div class="btn" style="left:675px;top:462px;width:73px;height:23px"></div>
<div class="dt" style="left:700px;top:468px">Ohje</div>
<table id="rtab"><colgroup><col style="width:180px"><col style="width:38px"><col style="width:42px"><col style="width:42px"><col style="width:37px"><col style="width:50px"></colgroup>
<tr><td><span>Name</span></td><td><span>D</span></td><td><span>m</span></td><td><span>s</span></td><td><span>h</span></td><td><span>d1</span></td></tr>
<tr><td><span>DIN_EN_ISO_10511-M3</span></td><td><span>3</span></td><td><span>2.7</span></td><td><span>5.5</span></td><td><span>4</span></td><td><span>2.5</span></td></tr>
<tr><td><span>DIN_EN_ISO_10511-M4</span></td><td><span>4</span></td><td><span>3.2</span></td><td><span>7</span></td><td><span>5</span></td><td><span>3.2</span></td></tr>
<tr><td><span>DIN_EN_ISO_10511-M5</span></td><td><span>5</span></td><td><span>3.5</span></td><td><span>8</span></td><td><span>5</span></td><td><span>4.1</span></td></tr>
<tr><td><span>DIN_EN_ISO_10511-M6</span></td><td><span>6</span></td><td><span>4.5</span></td><td><span>10</span></td><td><span>6</span></td><td><span>4.9</span></td></tr>
<tr><td><span>DIN_EN_ISO_10511-M8</span></td><td><span>8</span></td><td><span>6</span></td><td><span>13</span></td><td><span>8</span></td><td><span>6.9</span></td></tr>
<tr><td><span>DIN_EN_ISO_10511-M10</span></td><td><span>10</span></td><td><span>7</span></td><td><span>17</span></td><td><span>10</span></td><td><span>8.9</span></td></tr>
<tr><td><span>DIN_EN_ISO_10511-M12</span></td><td><span>12</span></td><td><span>9</span></td><td><span>19</span></td><td><span>12</span></td><td><span>10.6</span></td></tr>
<tr><td><span>DIN_EN_ISO_10511-M14</span></td><td><span>14</span></td><td><span>10</span></td><td><span>21</span></td><td><span>14</span></td><td><span>12.6</span></td></tr>
<tr style="height:18px"><td style="height:18px"><span>DIN_EN_ISO_10511-M16</span></td><td style="height:18px"><span>16</span></td><td style="height:18px"><span>11</span></td><td style="height:18px"><span>24</span></td><td style="height:18px"><span>16</span></td><td style="height:18px"><span>14.4</span></td></tr>
<tr><td><span>DIN_EN_ISO_10511-M20</span></td><td><span>20</span></td><td><span>15</span></td><td><span>30</span></td><td><span>20</span></td><td><span>18.4</span></td></tr>
<tr><td><span>DIN_EN_ISO_10511-M24</span></td><td><span>24</span></td><td><span>16</span></td><td><span>36</span></td><td><span>24</span></td><td><span>22.4</span></td></tr>
<tr><td><span>DIN_EN_ISO_10511-M30</span></td><td><span>30</span></td><td><span>23</span></td><td><span>46</span></td><td><span>30</span></td><td><span>27.8</span></td></tr>
</table>
</body></html>
